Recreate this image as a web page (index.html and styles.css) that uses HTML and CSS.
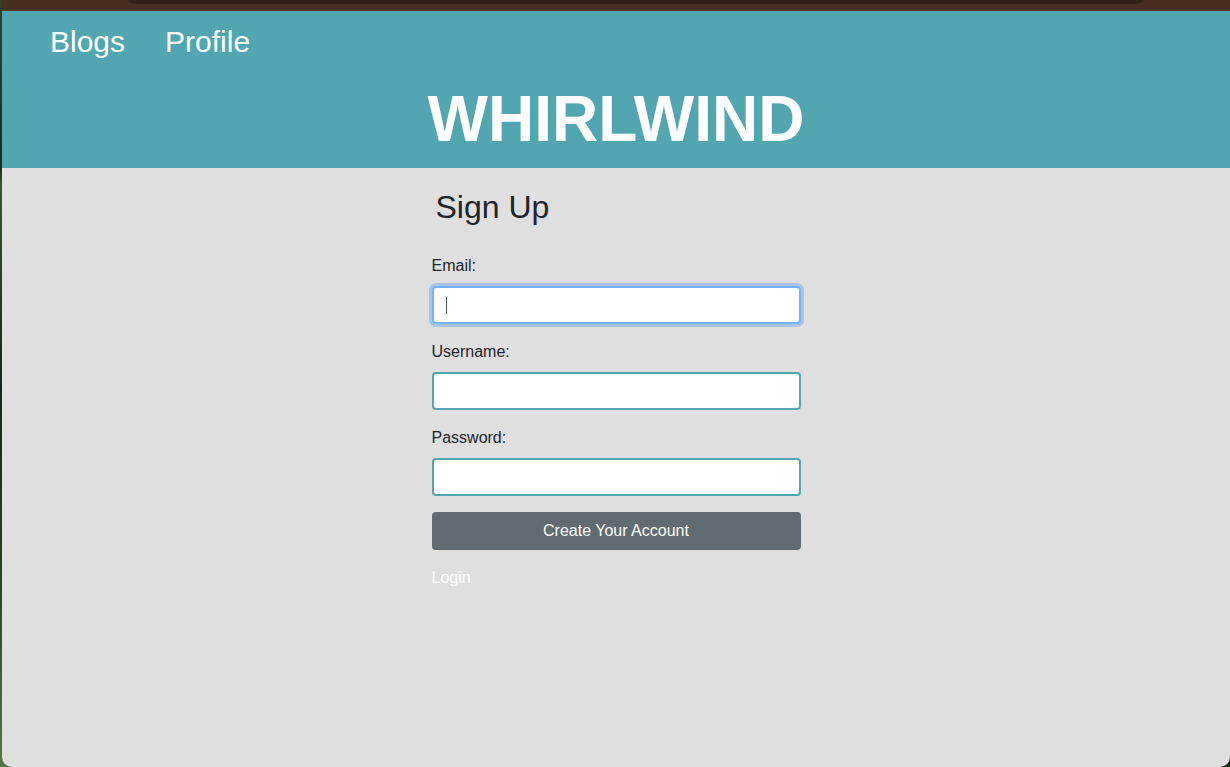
FILE: index.html
```html
<!DOCTYPE html>
<html lang="en">
<head>
  <meta charset="utf-8">
  <meta name="viewport" content="width=device-width, initial-scale=1">
  <title>Whirlwind</title>
  <link rel="stylesheet" href="styles.css">
</head>
<body class="desktop">
  <div class="window">
    <div class="toolbar"><div class="address-bar"></div></div>
    <div class="page">
      <header class="header">
        <nav class="nav">
          <a class="nav-link" href="#blogs">Blogs</a>
          <a class="nav-link" href="#profile">Profile</a>
        </nav>
        <h1 class="brand">WHIRLWIND</h1>
      </header>
      <main class="signup">
        <h2 class="signup-title">Sign Up</h2>
        <form class="form">
          <div class="field">
            <label for="email">Email:</label>
            <input class="input" id="email" type="text" autofocus>
            <span class="caret"></span>
          </div>
          <div class="field">
            <label for="username">Username:</label>
            <input class="input" id="username" type="text">
          </div>
          <div class="field">
            <label for="password">Password:</label>
            <input class="input" id="password" type="password">
          </div>
          <button class="button" type="submit">Create Your Account</button>
        </form>
        <a class="login-link" href="#login">Login</a>
      </main>
    </div>
  </div>
</body>
</html>
```
FILE: styles.css
```css
*,
*::before,
*::after {
  box-sizing: border-box;
}

.desktop {
  margin: 0;
  background: linear-gradient(#2c4428, #1c2c20 22%, #3c5434 24%, #16261c 50%, #2a4024 75%, #56793f);
  color: #212529;
  font: 16px/24px "Liberation Sans", Arial, sans-serif;
}

.window {
  display: flex;
  flex-direction: column;
  min-height: 100vh;
  padding-left: 2px;
  background: linear-gradient(to top left, #14260f 10px, transparent 10px);
}

.toolbar {
  height: 11px;
  padding: 0 86px 0 126px;
  background: #492e24;
  border-bottom: 1px solid #573f36;
}

.address-bar {
  height: 4px;
  background: #321f16;
  border-radius: 0 0 12px 12px / 0 0 4px 4px;
}

.page {
  flex: 1;
  background: #dfdfdf;
  border-radius: 0 0 10px 10px;
}

.header {
  padding: 8px 48px 10px;
  background: #52a6b2;
  color: #fff;
}

.nav {
  display: flex;
  gap: 40px;
  font-size: 30px;
  line-height: 45px;
}

.nav-link {
  color: inherit;
  text-decoration: none;
}

.brand {
  margin: 16px 0 0;
  font-size: 64px;
  line-height: 78px;
  text-align: center;
}

.signup {
  width: 30%;
  min-width: 369px;
  margin: 0 auto;
  padding-top: 20px;
}

.signup-title {
  margin: 0 0 28px;
  padding-left: 4px;
  font-size: 32px;
  font-weight: 400;
  line-height: 38px;
}

.field {
  display: flex;
  position: relative;
  flex-direction: column;
  gap: 8px;
  margin-bottom: 16px;
}

.input {
  width: 100%;
  height: 38px;
  padding: 6px 12px;
  border: 2px solid #52a6b2;
  border-radius: 4px;
  background: #fff;
  color: #495057;
  font: inherit;
}

.input:focus {
  border-color: #73b3fb;
  outline: 0;
  box-shadow: 0 0 0 3px #a7c3e8;
  caret-color: transparent;
}

.caret {
  display: none;
  position: absolute;
  bottom: 10px;
  left: 14px;
  width: 1px;
  height: 17px;
  background: #495057;
  pointer-events: none;
}

.input:focus:placeholder-shown + .caret,
.input:focus + .caret {
  display: block;
}

.button {
  display: block;
  width: 100%;
  height: 38px;
  margin-bottom: 16px;
  border: 0;
  border-radius: 4px;
  background: #616c72;
  color: #fff;
  font: inherit;
}

.login-link {
  color: #fff;
  text-decoration: none;
}
```
